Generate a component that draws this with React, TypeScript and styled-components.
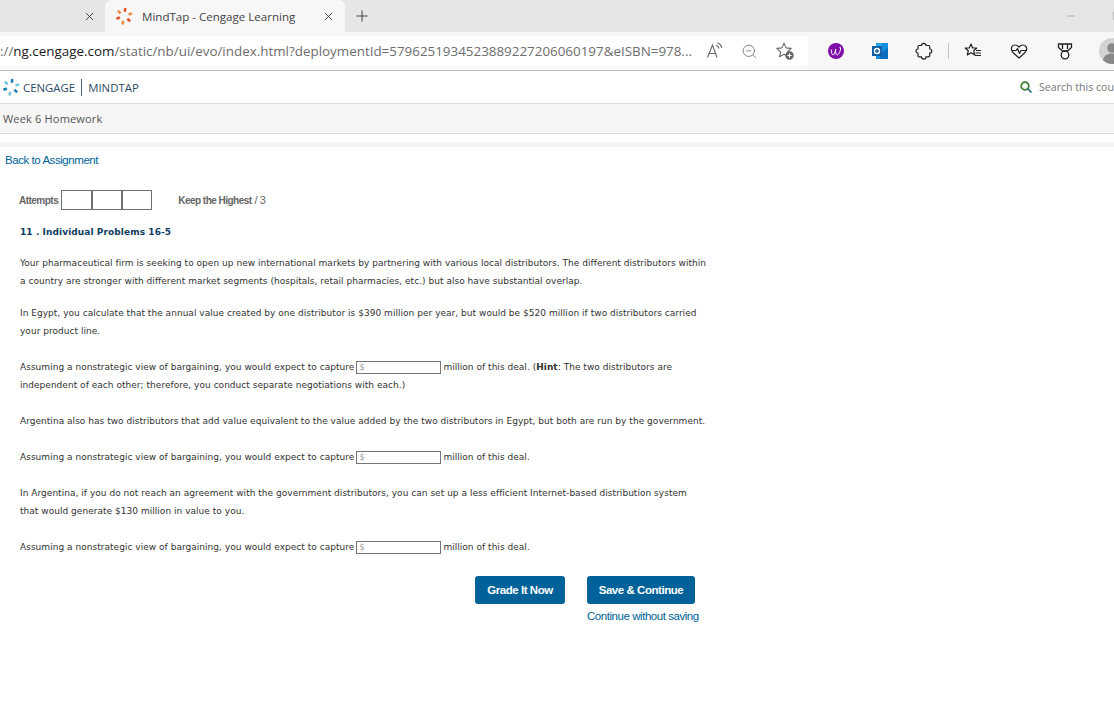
import React from 'react';
import styled, { createGlobalStyle } from 'styled-components';
import { X, Plus, Minus, ZoomOut, Square } from 'lucide-react';

const GlobalStyle = createGlobalStyle`
  html, body {
    margin: 0;
    padding: 0;
    background: #fff;
    overflow: hidden;
  }
`;

const Page = styled.div`
  width: 1114px;
  height: 720px;
  overflow: hidden;
  font-family: "Liberation Sans", Arial, sans-serif;
`;

const TabStrip = styled.div`
  display: flex;
  align-items: flex-end;
  height: 32px;
  background: #e6e6e6;
`;

const InactiveTab = styled.div`
  display: flex;
  align-items: center;
  justify-content: flex-end;
  width: 105px;
  height: 32px;
  box-sizing: border-box;
  padding-right: 9px;
  color: #333;
`;

const ActiveTab = styled.div`
  display: flex;
  align-items: center;
  width: 240px;
  height: 32px;
  box-sizing: border-box;
  padding: 0 10px 0 10px;
  background: #f7f7f7;
  border-radius: 6px 6px 0 0;
  color: #333;
`;

const TabTitle = styled.span`
  flex: 1;
  margin-left: 9px;
  font-family: "Open Sans", sans-serif;
  font-size: 11.55px;
  color: #444;
`;

const NewTab = styled.div`
  display: flex;
  align-items: center;
  height: 32px;
  margin-left: 8px;
  color: #333;
`;

const WindowControls = styled.div`
  display: flex;
  align-items: center;
  gap: 35px;
  height: 32px;
  margin-left: auto;
  margin-right: -8px;
  color: #777;
  svg {
    flex-shrink: 0;
  }
`;

const Toolbar = styled.div`
  display: flex;
  align-items: center;
  height: 38px;
  background: #f7f7f7;
  border-bottom: 1px solid #bdbdbd;
`;

const AddressBar = styled.div`
  display: flex;
  align-items: center;
  width: 808px;
  height: 30px;
  flex-shrink: 0;
  background: #fff;
  border-radius: 0 4px 4px 0;
  overflow: hidden;
`;

const Url = styled.div`
  width: 698px;
  flex-shrink: 0;
  font-family: "Open Sans", sans-serif;
  font-size: 13.4px;
  white-space: nowrap;
  color: #6d6d6d;
  overflow: hidden;
`;

const UrlHost = styled.span`
  color: #1a1a1a;
`;

const AddressIcons = styled.div`
  display: flex;
  align-items: center;
  gap: 17px;
  flex: 1;
  box-sizing: border-box;
  padding-left: 8px;
  color: #666;
`;

const ToolIcons = styled.div`
  display: flex;
  align-items: center;
  flex: 1;
  padding-left: 18px;
`;

const ToolSlot = styled.div<{ $w: number }>`
  display: flex;
  align-items: center;
  justify-content: center;
  width: ${(p) => p.$w}px;
  flex-shrink: 0;
`;

const ToolDivider = styled.div`
  width: 1px;
  height: 16px;
  margin: 0 14px 0 6px;
  background: #c4c4c4;
`;

const BrandBar = styled.div`
  display: flex;
  align-items: center;
  justify-content: space-between;
  height: 32px;
  padding-left: 2px;
  background: #fff;
  border-bottom: 1px solid #dcdcdc;
`;

const Brand = styled.div`
  display: flex;
  align-items: center;
  font-family: "Open Sans", sans-serif;
  font-size: 11.4px;
  line-height: 15px;
  color: #2d4d68;
`;

const BrandName = styled.span`
  margin-left: 3px;
  padding-right: 6px;
  line-height: 17px;
  border-right: 1px solid #44627a;
`;

const BrandProduct = styled.span`
  margin-left: 6px;
`;

const SearchBox = styled.div`
  display: flex;
  align-items: center;
  gap: 7px;
  width: 94px;
  flex-shrink: 0;
  overflow: hidden;
  white-space: nowrap;
  font-family: "Open Sans", sans-serif;
  font-size: 10.6px;
  color: #777;
  svg {
    flex-shrink: 0;
  }
`;

const CrumbBar = styled.div`
  display: flex;
  align-items: center;
  height: 29px;
  padding-left: 3px;
  background: #f6f6f6;
  border-bottom: 1px solid #dcdcdc;
  font-family: "Open Sans", sans-serif;
  font-size: 11px;
  letter-spacing: 0.18px;
  color: #555;
`;

const Band = styled.div`
  height: 5px;
  margin-top: 8px;
  background: #f2f5f5;
`;

const Content = styled.div`
  position: relative;
  padding: 6px 0 0 5px;
`;

const BackLink = styled.a`
  display: block;
  font-size: 11.5px;
  line-height: 14px;
  letter-spacing: -0.44px;
  color: #006298;
`;

const AttemptsRow = styled.div`
  display: flex;
  align-items: center;
  height: 20px;
  margin: 23px 0 0 14px;
  font-size: 10px;
  font-weight: bold;
  letter-spacing: -0.52px;
  color: #666;
`;

const AttemptBoxes = styled.div`
  display: flex;
  height: 20px;
  margin-left: 3px;
  box-sizing: border-box;
  border: 1px solid #707070;
`;

const AttemptBox = styled.div`
  width: 29px;
  box-sizing: border-box;
  & + & {
    width: 30px;
    border-left: 2px solid #707070;
  }
`;

const KeepLabel = styled.span`
  margin-left: 26px;
`;

const OutOf = styled.span`
  margin-left: 3px;
  font-size: 11px;
  font-weight: normal;
`;

const Question = styled.div`
  width: 687px;
  margin-left: 15px;
  font-family: "DejaVu Sans", Verdana, sans-serif;
  font-size: 9px;
  line-height: 18px;
  letter-spacing: 0.03px;
  color: #333;
`;

const Title = styled.div`
  margin-top: 13px;
  font-weight: bold;
  letter-spacing: 0.08px;
  color: #0f3d63;
`;

const Para = styled.p<{ $top: number }>`
  margin: ${(p) => p.$top}px 0 0;
`;

const Amount = styled.input`
  width: 85px;
  height: 13px;
  box-sizing: border-box;
  margin: 3px 2px 0;
  padding: 0 0 0 2px;
  border: 1px solid #767676;
  border-radius: 0;
  vertical-align: top;
  background: #fff;
  font-family: "DejaVu Sans", sans-serif;
  font-size: 8px;
  &::placeholder {
    color: #999;
  }
`;

const Actions = styled.div`
  display: flex;
  align-items: flex-start;
  gap: 22px;
  margin: 20px 0 0 470px;
`;

const SaveGroup = styled.div`
  display: flex;
  flex-direction: column;
`;

const ActionButton = styled.button<{ $w: number }>`
  width: ${(p) => p.$w}px;
  height: 28px;
  padding: 0;
  border: none;
  border-radius: 3px;
  background: #006298;
  color: #fff;
  font-family: "Liberation Sans", Arial, sans-serif;
  font-size: 11.5px;
  font-weight: bold;
  letter-spacing: -0.45px;
`;

const SkipLink = styled.a`
  margin-top: 5px;
  font-size: 11.5px;
  line-height: 14px;
  letter-spacing: -0.45px;
  white-space: nowrap;
  color: #006298;
`;

const blades = [
  { angle: 10, r: 9, k: 0 },
  { angle: 72, r: 9.5, k: 1 },
  { angle: 130, r: 9, k: 0 },
  { angle: 190, r: 9.5, k: 1 },
  { angle: 250, r: 9, k: 0 },
  { angle: 310, r: 9, k: 1 },
];

const Pinwheel = ({ colors, size }: { colors: string[]; size: number }) => (
  <svg width={size} height={size} viewBox="0 0 20 20">
    {blades.map((b) => (
      <path
        key={b.angle}
        d={`M10 ${10 - b.r}V${10 - b.r + 4.2}`}
        stroke={colors[b.k]}
        strokeWidth="2.8"
        transform={`rotate(${b.angle} 10 10)`}
      />
    ))}
  </svg>
);

const ReadAloud = () => (
  <svg width="18" height="18" viewBox="0 0 18 18" fill="none" stroke="#666" strokeWidth="1.1">
    <path d="M1.5 15.5L6.5 3l4.5 12.5M3.2 11.5h6.6" />
    <path d="M10 3.2c1.600.5 2.600 1.700 3 3.300M11.500 1c2.400.7 3.800 2.400 4.400 4.800" />
  </svg>
);

const FavoriteAdd = () => (
  <svg width="20" height="20" viewBox="0 0 20 20">
    <path d="M9 2.200l2.100 4.700 5.100.5-3.800 3.400 1 5-4.400-2.600-4.400 2.600 1-5L1.800 7.400l5.100-.5z" fill="none" stroke="#666" strokeWidth="1.100" strokeLinejoin="round" />
    <circle cx="14.500" cy="14.500" r="4.200" fill="#666" />
    <path d="M14.500 12.300v4.400M12.300 14.500h4.400" stroke="#fff" strokeWidth="1.100" />
  </svg>
);

const WritingBadge = () => (
  <svg width="16" height="16" viewBox="0 0 16 16">
    <circle cx="8" cy="8" r="8" fill="#7d0fa8" />
    <path d="M3.200 6.500c.2 3 .8 5.500 1.800 5.500 1.300 0 2.300-3.500 2.700-6-.3 3 .2 6 1.300 6 1.900 0 3.600-4.500 3.600-7 0-1-.8-1-1.200-.2" fill="none" stroke="#fff" strokeWidth="1" />
  </svg>
);

const OutlookIcon = () => (
  <svg width="16" height="16" viewBox="0 0 16 16">
    <rect x="4" y="0" width="12" height="16" fill="#1490df" />
    <rect x="4" y="0" width="6" height="5" fill="#28a8ea" />
    <path d="M8 10l8-5v11H8z" fill="#0a6cbf" />
    <rect x="0" y="3" width="10" height="10" fill="#0f5fa8" />
    <circle cx="5" cy="8" r="2.500" fill="none" stroke="#fff" strokeWidth="1.400" />
  </svg>
);

const PuzzleIcon = () => (
  <svg width="18" height="18" viewBox="0 0 18 18" fill="none" stroke="#222" strokeWidth="1.200" strokeLinejoin="round">
    <path d="M6.500 3.500c0-1.300 1-2.200 2.300-2.200s2.200.9 2.200 2.200h2.700a1 1 0 0 1 1 1V7c1.300 0 2 1 2 2s-.7 2-2 2v2.800a1 1 0 0 1-1 1H11c0 1.400-1 2.400-2.200 2.400S6.500 16.200 6.500 14.800H4a1 1 0 0 1-1-1V11c-1.200 0-2-1-2-2s.8-2 2-2V4.500a1 1 0 0 1 1-1z" />
  </svg>
);

const FavoritesIcon = () => (
  <svg width="18" height="18" viewBox="0 0 18 18" fill="none" stroke="#222" strokeWidth="1.200" strokeLinejoin="round">
    <path d="M7 2l1.700 4h4.100l-3.100 2.700 1 4.300L7 10.700 3.300 13l1-4.300L1.200 6h4.100z" />
    <path d="M12 8.500h5M11.500 11h5.500M11 13.500h6" />
  </svg>
);

const HealthIcon = () => (
  <svg width="18" height="18" viewBox="0 0 18 18" fill="none" stroke="#222" strokeWidth="1.200" strokeLinejoin="round">
    <path d="M3 10.500L1.800 8.500C.5 5.500 2.500 3 5 3c1.700 0 3 .8 4 2 1-1.200 2.300-2 4-2 2.500 0 4.500 2.500 3.200 5.500L15 10.500 9 16z" />
    <path d="M1.500 8.500h4.700l1.300-2 2 5 1.500-3h6" />
  </svg>
);

const MedalIcon = () => (
  <svg width="18" height="18" viewBox="0 0 18 18" fill="none" stroke="#222" strokeWidth="1.300">
    <path d="M2.500 2h13v3.500L11.500 9h-5L2.500 5.500z" />
    <path d="M6.500 2v5M11.500 2v5" />
    <circle cx="9" cy="13" r="3.800" />
  </svg>
);

const Avatar = () => (
  <svg width="26" height="26" viewBox="0 0 26 26">
    <circle cx="13" cy="13" r="13" fill="#d5d3d1" />
    <circle cx="13" cy="10" r="4.800" fill="#8a8886" />
    <path d="M4 22c1-5 5-6.500 9-6.500s8 1.500 9 6.500c-2.400 2.500-5.500 4-9 4s-6.600-1.500-9-4z" fill="#8a8886" />
  </svg>
);

const SearchIcon = () => (
  <svg width="12" height="12" viewBox="0 0 12 12" fill="none" strokeWidth="1.700" strokeLinecap="round">
    <circle cx="5" cy="5" r="3.800" stroke="#3f7f2f" />
    <path d="M8 8l3 3" stroke="#1d6b70" />
  </svg>
);

const App: React.FC = () => {
  return (
    <Page>
      <GlobalStyle />
      <TabStrip>
        <InactiveTab>
          <X size={13} strokeWidth={1.6} />
        </InactiveTab>
        <ActiveTab>
          <Pinwheel size={18} colors={['#e8502a', '#f08a3c']} />
          <TabTitle>MindTap - Cengage Learning</TabTitle>
          <X size={13} strokeWidth={1.6} />
        </ActiveTab>
        <NewTab>
          <Plus size={18} strokeWidth={1.2} />
        </NewTab>
        <WindowControls>
          <Minus size={12} strokeWidth={1} />
          <Square size={10} strokeWidth={1} />
        </WindowControls>
      </TabStrip>
      <Toolbar>
        <AddressBar>
          <Url>
            ://<UrlHost>ng.cengage.com</UrlHost>/static/nb/ui/evo/index.html?deploymentId=5796251934523889227206060197&amp;eISBN=978...
          </Url>
          <AddressIcons>
            <ReadAloud />
            <ZoomOut size={17} strokeWidth={1.1} />
            <FavoriteAdd />
          </AddressIcons>
        </AddressBar>
        <ToolIcons>
          <ToolSlot $w={20}>
            <WritingBadge />
          </ToolSlot>
          <ToolSlot $w={68}>
            <OutlookIcon />
          </ToolSlot>
          <ToolSlot $w={20}>
            <PuzzleIcon />
          </ToolSlot>
          <ToolSlot $w={8} />
          <ToolDivider />
          <ToolSlot $w={20}>
            <FavoritesIcon />
          </ToolSlot>
          <ToolSlot $w={26} />
          <ToolSlot $w={20}>
            <HealthIcon />
          </ToolSlot>
          <ToolSlot $w={26} />
          <ToolSlot $w={20}>
            <MedalIcon />
          </ToolSlot>
          <ToolSlot $w={24} />
          <Avatar />
        </ToolIcons>
      </Toolbar>
      <BrandBar>
        <Brand>
          <Pinwheel size={18} colors={['#1f7fb5', '#6fc3dd']} />
          <BrandName>CENGAGE</BrandName>
          <BrandProduct>MINDTAP</BrandProduct>
        </Brand>
        <SearchBox>
          <SearchIcon />
          Search this course
        </SearchBox>
      </BrandBar>
      <CrumbBar>Week 6 Homework</CrumbBar>
      <Band />
      <Content>
        <BackLink>Back to Assignment</BackLink>
        <AttemptsRow>
          Attempts
          <AttemptBoxes>
            <AttemptBox />
            <AttemptBox />
            <AttemptBox />
          </AttemptBoxes>
          <KeepLabel>Keep the Highest</KeepLabel>
          <OutOf>/ 3</OutOf>
        </AttemptsRow>
        <Question>
          <Title>11 . Individual Problems 16-5</Title>
          <Para $top={13}>
            Your pharmaceutical firm is seeking to open up new international markets by partnering with various local distributors. The different distributors within a country are stronger with different market segments (hospitals, retail pharmacies, etc.) but also have substantial overlap.
          </Para>
          <Para $top={14}>
            In Egypt, you calculate that the annual value created by one distributor is $390 million per year, but would be $520 million if two distributors carried your product line.
          </Para>
          <Para $top={18}>
            Assuming a nonstrategic view of bargaining, you would expect to capture
            <Amount placeholder="$" />
            million of this deal. (<b>Hint</b>: The two distributors are independent of each other; therefore, you conduct separate negotiations with each.)
          </Para>
          <Para $top={18}>
            Argentina also has two distributors that add value equivalent to the value added by the two distributors in Egypt, but both are run by the government.
          </Para>
          <Para $top={18}>
            Assuming a nonstrategic view of bargaining, you would expect to capture
            <Amount placeholder="$" />
            million of this deal.
          </Para>
          <Para $top={18}>
            In Argentina, if you do not reach an agreement with the government distributors, you can set up a less efficient Internet-based distribution system that would generate $130 million in value to you.
          </Para>
          <Para $top={18}>
            Assuming a nonstrategic view of bargaining, you would expect to capture
            <Amount placeholder="$" />
            million of this deal.
          </Para>
        </Question>
        <Actions>
          <ActionButton $w={90}>Grade It Now</ActionButton>
          <SaveGroup>
            <ActionButton $w={108}>Save &amp; Continue</ActionButton>
            <SkipLink>Continue without saving</SkipLink>
          </SaveGroup>
        </Actions>
      </Content>
    </Page>
  );
};

export default App;
